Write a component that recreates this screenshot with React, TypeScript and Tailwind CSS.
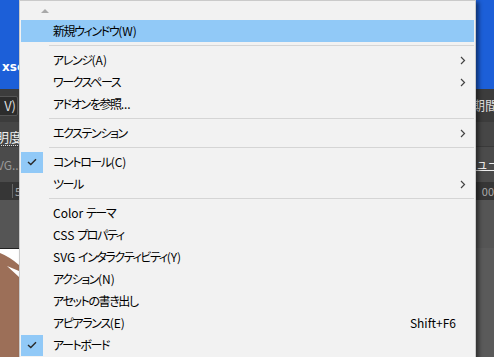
import React from "react";

type Item =
  | { kind: "sep" }
  | { kind: "item"; label: string; sub?: boolean; checked?: boolean; hl?: boolean; shortcut?: string };

const items: Item[] = [
  { kind: "item", label: "新規ウィンドウ(W)", hl: true },
  { kind: "sep" },
  { kind: "item", label: "アレンジ(A)", sub: true },
  { kind: "item", label: "ワークスペース", sub: true },
  { kind: "item", label: "アドオンを参照..." },
  { kind: "sep" },
  { kind: "item", label: "エクステンション", sub: true },
  { kind: "sep" },
  { kind: "item", label: "コントロール(C)", checked: true },
  { kind: "item", label: "ツール", sub: true },
  { kind: "sep" },
  { kind: "item", label: "Color テーマ" },
  { kind: "item", label: "CSS プロパティ" },
  { kind: "item", label: "SVG インタラクティビティ(Y)" },
  { kind: "item", label: "アクション(N)" },
  { kind: "item", label: "アセットの書き出し" },
  { kind: "item", label: "アピアランス(E)", shortcut: "Shift+F6" },
  { kind: "item", label: "アートボード", checked: true },
];

function Label({ text }: { text: string }) {
  const parts = text.split(/([\u3000-\u30ff\u4e00-\u9fff]+)/).filter((p) => p.length > 0);
  return (
    <>
      {parts.map((p, i) =>
        /[\u3000-\u30ff\u4e00-\u9fff]/.test(p) ? (
          <span key={i} className="tracking-[-1.4px]" style={{ fontFeatureSettings: '"palt"' }}>
            {p}
          </span>
        ) : (
          <span key={i}>{p}</span>
        )
      )}
    </>
  );
}

function Chevron() {
  return (
    <svg width="6" height="9" viewBox="0 0 6 9" className="block">
      <path d="M1 1 L4.5 4.5 L1 8" fill="none" stroke="#444" strokeWidth="1.2" />
    </svg>
  );
}

function Check() {
  return (
    <svg width="10" height="8" viewBox="0 0 10 8" className="block">
      <path d="M1 4 L3.8 6.6 L9 1.2" fill="none" stroke="#2a2a2a" strokeWidth="1.4" />
    </svg>
  );
}

export default function App() {
  return (
    <div
      className="relative w-[494px] h-[357px] overflow-hidden bg-[#5a5a5a]"
      style={{ fontFamily: '"Noto Sans CJK JP", "Noto Sans", sans-serif' }}
    >
      {/* background app */}
      <div className="flex flex-col w-full">
        <div className="shrink-0 h-[89px] bg-[#1c5fd8] flex items-end pb-[16px]">
          <span className="text-white text-[12px] font-bold pl-[2px] leading-none" style={{ fontFamily: '"DejaVu Sans", sans-serif' }}>xse</span>
        </div>
        <div className="shrink-0 h-[33px] bg-[#3c3c3c] flex items-center justify-between">
          <div className="ml-[-20px] w-[38px] h-[20px] bg-[#2c2c2c] border border-[#555] rounded-[2px] flex items-center justify-end pr-[1px]">
            <span className="text-[#ddd] text-[13px] leading-none">V)</span>
          </div>
          <span className="text-[#ddd] text-[13px] leading-none mr-[-4px] mt-[-2px]">如期間</span>
        </div>
        <div className="shrink-0 h-[24px] bg-[#464646] flex items-end justify-between">
          <span className="text-[#eee] text-[13px] leading-none ml-[-4px] border-b border-dotted border-[#ddd] pb-[2px]">明度</span>
        </div>
        <div className="shrink-0 h-[36px] bg-[#4b4b4b] flex items-center justify-between border-t border-[#3a3a3a]">
          <span className="text-[#999] text-[12px] leading-none ml-[-3px]">VG...</span>
          <span className="text-[#eee] text-[12px] leading-none mr-[-6px] border-b border-[#eee]">ビュー</span>
        </div>
        <div className="shrink-0 h-[18px] bg-[#363636] flex items-center justify-between">
          <div className="flex items-center">
            <div className="w-[12px]" />
            <div className="w-px h-[14px] bg-[#666]" />
            <span className="text-[#aaa] text-[11px] leading-none ml-[2px]">5</span>
          </div>
          <span className="text-[#aaa] text-[11px] leading-none">00</span>
        </div>
        <div className="shrink-0 h-[48px] bg-[#555]" />
        <div className="shrink-0 h-px bg-[#222] w-[20px]" />
        <svg width="20" height="110" viewBox="0 0 20 110" className="block shrink-0">
          <rect x="0" y="0" width="20" height="110" fill="#ffffff" />
          <path d="M0 4 Q10 8 19 16 L19 22 L7 17 L19 28 L20 110 L0 110 Z" fill="#9c6f58" />
        </svg>
      </div>

      {/* menu */}
      <div className="absolute left-[19px] top-0 w-[457px] h-[370px] bg-[#f2f2f2] border border-[#cacaca] px-[1px] shadow-[3px_2px_4px_rgba(0,0,0,0.45)]">
        <div className="h-[19px] flex items-center pl-[20px]">
          <svg width="8" height="5" viewBox="0 0 8 5" className="block mt-[-1px]">
            <path d="M0 5 L4 1 L8 5 Z" fill="#a9a9a9" />
          </svg>
        </div>
        {items.map((it, i) =>
          it.kind === "sep" ? (
            <div key={i} className="h-[7px] flex items-center pl-[28px]">
              <div className="h-px w-full bg-[#d5d5d5]" />
            </div>
          ) : (
            <div
              key={i}
              className={`h-[22px] flex items-center text-[12px] text-black leading-none ${it.hl ? "bg-[#91c9f7]" : ""}`}
            >
              <div className="w-[22px] h-[22px] flex items-center justify-center">
                {it.checked ? (
                  <div className="w-[22px] h-[21px] bg-[#91c9f7] flex items-center justify-center">
                    <Check />
                  </div>
                ) : null}
              </div>
              <span className="ml-[10px] flex-1 whitespace-nowrap">
                <Label text={it.label} />
              </span>
              {it.shortcut ? (
                <span className="mr-[18px] whitespace-nowrap">{it.shortcut}</span>
              ) : null}
              {it.sub ? (
                <div className="mr-[8px]">
                  <Chevron />
                </div>
              ) : null}
            </div>
          )
        )}
      </div>
    </div>
  );
}
